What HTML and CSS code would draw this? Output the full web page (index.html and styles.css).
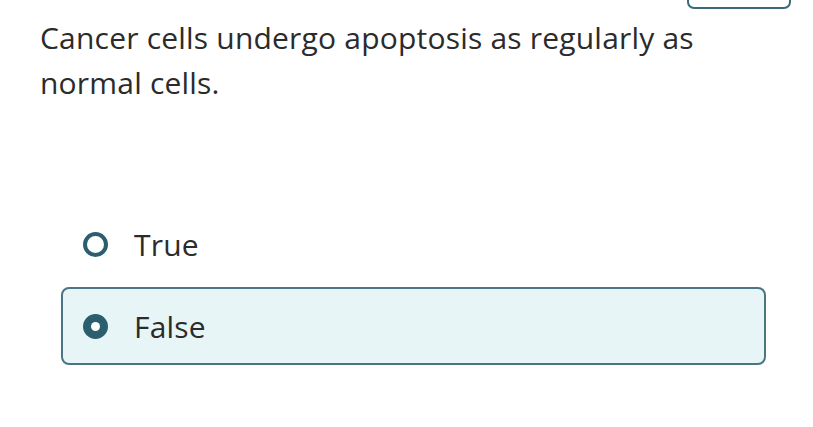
FILE: index.html
```html
<!DOCTYPE html>
<html>
<head>
<meta charset="utf-8">
<link rel="stylesheet" href="styles.css">
</head>
<body>
<div class="topbar"><div class="topbox"></div></div>
<p class="question">Cancer cells undergo apoptosis as regularly as normal cells.</p>
<div class="options">
  <label class="option">
    <span class="radio"></span>
    <span class="label">True</span>
  </label>
  <label class="option selected">
    <span class="radio checked"></span>
    <span class="label">False</span>
  </label>
</div>
</body>
</html>
```

FILE: styles.css
```css
html, body {
  margin: 0;
  padding: 0;
  background: #ffffff;
}
body {
  width: 813px;
  height: 427px;
  overflow: hidden;
  font-family: "Open Sans", "Noto Sans", sans-serif;
  color: #2b2b2b;
}
.topbar {
  height: 6px;
  display: flex;
  justify-content: flex-end;
  padding-right: 22px;
}
.topbox {
  width: 100px;
  height: 30px;
  margin-top: -25px;
  border: 2px solid #3b6b7b;
  border-radius: 7px;
}
.question {
  margin: 9px 0 0 40px;
  width: 700px;
  font-size: 30px;
  letter-spacing: 0.2px;
  line-height: 45px;
}
.options {
  margin: 100px 0 0 61px;
  width: 705px;
  display: flex;
  flex-direction: column;
  gap: 4px;
}
.option {
  box-sizing: border-box;
  height: 78px;
  display: flex;
  align-items: center;
  padding-left: 20px;
  gap: 26px;
  border: 2px solid transparent;
  border-radius: 8px;
  font-size: 30px;
  letter-spacing: 0.2px;
}
.option.selected {
  background: #e8f5f7;
  border-color: #4a7585;
}
.radio {
  box-sizing: border-box;
  width: 25px;
  height: 25px;
  border-radius: 50%;
  border: 4px solid #2b5e6e;
  flex: none;
}
.radio.checked {
  background: #2b5e6e;
  position: relative;
}
.radio.checked::after {
  content: "";
  position: absolute;
  left: 50%;
  top: 50%;
  width: 9px;
  height: 9px;
  margin: -4.5px 0 0 -4.5px;
  border-radius: 50%;
  background: #ffffff;
}
```
